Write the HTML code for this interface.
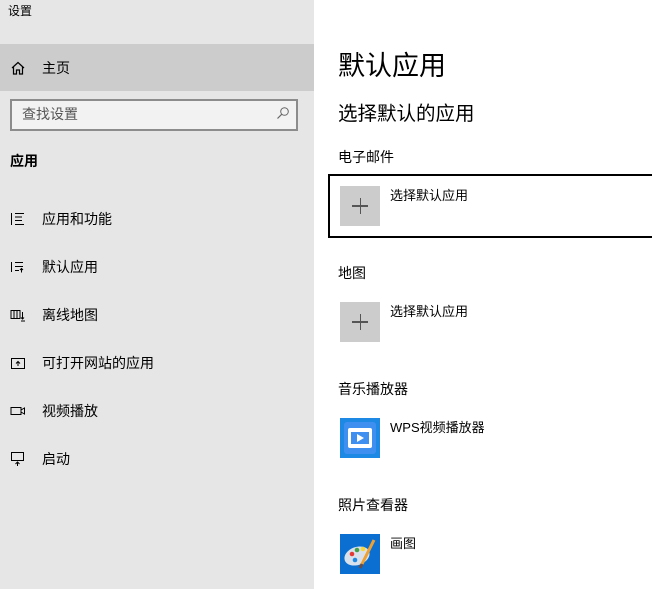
<!DOCTYPE html>
<html><head><meta charset="utf-8"><style>
*{margin:0;padding:0;box-sizing:border-box}
body{width:652px;height:589px;overflow:hidden;background:#fff;font-family:"Liberation Sans","Noto Sans CJK SC","Microsoft YaHei",sans-serif;color:#000;position:relative}
.a{position:absolute;white-space:nowrap;line-height:1}
#side{position:absolute;left:0;top:0;width:314px;height:589px;background:#e6e6e6}
#home{position:absolute;left:0;top:44px;width:314px;height:47px;background:#cccccc}
#search{position:absolute;left:10px;top:99px;width:288px;height:32px;border:2px solid #8c8c8c;background:#f2f2f2}
.nav{font-size:14px;left:42px}
.ic{position:absolute;left:10px}
.tile{position:absolute;left:340px;width:40px;height:40px;background:#cccccc}
.tile:before{content:"";position:absolute;left:12px;top:19px;width:16px;height:1.5px;background:#555}
.tile:after{content:"";position:absolute;left:19.5px;top:12px;width:1.5px;height:16px;background:#555}
.lbl{font-size:14px;left:338px}
.it{font-size:13px;left:390px}
</style></head><body>
<div id="side"></div>
<div id="home"></div>
<div class="a" style="left:8px;top:5px;font-size:12px">设置</div>
<svg class="ic" style="top:60px" width="16" height="16" viewBox="0 0 16 16"><path d="M2 8 L8 2.5 L14 8 M3.5 7 V14 H6.5 V10 H9.5 V14 H12.5 V7" fill="none" stroke="#000" stroke-width="1.2"/></svg>
<div class="a nav" style="top:61px">主页</div>
<div id="search"></div>
<div class="a" style="left:22px;top:107px;font-size:14px;color:#555">查找设置</div>
<svg style="position:absolute;left:276px;top:106px" width="14" height="14" viewBox="0 0 14 14"><circle cx="8.5" cy="5.5" r="3.8" fill="none" stroke="#666" stroke-width="1"/><path d="M5.8 8.2 L1.5 12.5" stroke="#666" stroke-width="1.2"/></svg>
<div class="a" style="left:10px;top:154px;font-size:14px;font-weight:bold">应用</div>
<svg class="ic" style="top:211px" width="16" height="16" viewBox="0 0 16 16" fill="none" stroke="#000" stroke-width="1"><path d="M1.5 2v12M1 2.5h1M1 6h1M1 9.5h1M1 13h1"/><path d="M5 2.5h9M5 6h7M5 9.5h7M5 13.5h9"/></svg>
<div class="a nav" style="top:212px">应用和功能</div>
<svg class="ic" style="top:259px" width="16" height="16" viewBox="0 0 16 16" fill="none" stroke="#000" stroke-width="1"><path d="M1.5 3v10M1 3.5h1M1 7.5h1M1 11.5h1M5 3.5h8M5 7.5h8M5 11.5h4M11.5 13.5V9.5M10 11l1.5-1.5L13 11"/></svg>
<div class="a nav" style="top:260px">默认应用</div>
<svg class="ic" style="top:307px" width="16" height="16" viewBox="0 0 16 16" fill="none" stroke="#000" stroke-width="1"><path d="M1 3.5h9v8H1zM4 3.5v8M7 3.5v8M12.5 5v7M11 10.5l1.5 1.5 1.5-1.5M11 14h4"/></svg>
<div class="a nav" style="top:308px">离线地图</div>
<svg class="ic" style="top:355px" width="16" height="16" viewBox="0 0 16 16" fill="none" stroke="#000" stroke-width="1"><path d="M1.5 3.5h13v10h-13zM8 11V6.5M6 8.5l2-2 2 2"/></svg>
<div class="a nav" style="top:356px">可打开网站的应用</div>
<svg class="ic" style="top:403px" width="16" height="16" viewBox="0 0 16 16" fill="none" stroke="#000" stroke-width="1"><path d="M1 4.5h10v7H1zM11 7l3.5-2v6L11 9"/></svg>
<div class="a nav" style="top:404px">视频播放</div>
<svg class="ic" style="top:451px" width="16" height="16" viewBox="0 0 16 16" fill="none" stroke="#000" stroke-width="1"><path d="M1.5 1.5h12v8h-12zM7.5 15V11M5.5 13l2-2 2 2"/></svg>
<div class="a nav" style="top:452px">启动</div>

<div class="a" style="left:338px;top:53px;font-size:27px">默认应用</div>
<div class="a" style="left:338px;top:105px;font-size:19.5px">选择默认的应用</div>
<div class="a lbl" style="top:150px">电子邮件</div>
<div style="position:absolute;left:328px;top:174px;width:330px;height:64px;border:2px solid #000"></div>
<div class="tile" style="top:186px"></div>
<div class="a it" style="top:189px">选择默认应用</div>
<div class="a lbl" style="top:266px">地图</div>
<div class="tile" style="top:302px"></div>
<div class="a it" style="top:305px">选择默认应用</div>
<div class="a lbl" style="top:382px">音乐播放器</div>
<div style="position:absolute;left:340px;top:418px;width:40px;height:40px;background:#1e88e5">
<div style="position:absolute;left:4px;top:4px;width:32px;height:32px;background:#3f8ff0;border-radius:3px"></div>
<div style="position:absolute;left:8px;top:10px;width:24px;height:20px;background:#fff;border-radius:2px"></div>
<div style="position:absolute;left:11px;top:14px;width:18px;height:12px;background:#3f8ff0"></div>
<div style="position:absolute;left:17px;top:16px;width:0;height:0;border-left:7px solid #fff;border-top:4px solid transparent;border-bottom:4px solid transparent"></div>
</div>
<div class="a it" style="top:421px">WPS视频播放器</div>
<div class="a lbl" style="top:498px">照片查看器</div>
<div style="position:absolute;left:340px;top:534px;width:40px;height:40px;background:#0a6fd1">
<svg width="40" height="40" viewBox="0 0 40 40"><ellipse cx="17" cy="22" rx="13" ry="9" fill="#d9e2ec" transform="rotate(-20 17 22)"/><circle cx="12" cy="20" r="2.3" fill="#e53935"/><circle cx="17" cy="16" r="2.3" fill="#43a047"/><circle cx="23" cy="15" r="2.3" fill="#fdd835"/><circle cx="15" cy="26" r="2.3" fill="#1e88e5"/><path d="M34 6 L22 30" stroke="#f0a030" stroke-width="3"/><path d="M22 30 l-2 4" stroke="#6d4c41" stroke-width="3"/></svg>
</div>
<div class="a it" style="top:537px">画图</div>
</body></html>
